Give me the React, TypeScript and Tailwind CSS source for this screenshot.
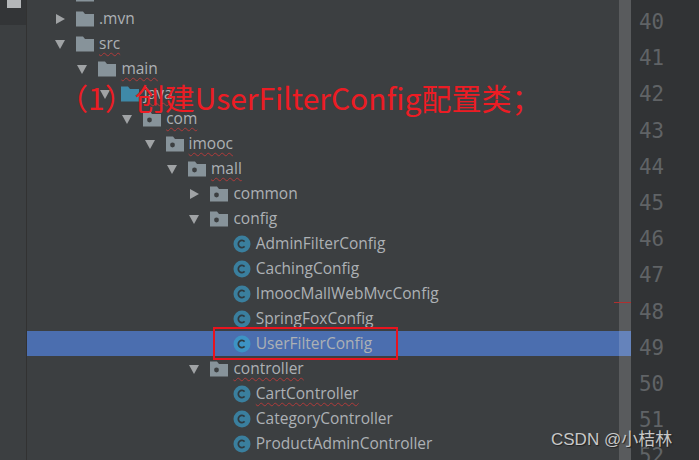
import React, { FC } from "react";

type Kind = "folder" | "package" | "source" | "class";

interface TreeRow {
  depth: number;
  label: string;
  kind: Kind;
  arrow?: "open" | "closed";
  squiggle?: boolean;
  selected?: boolean;
}

const rows: TreeRow[] = [
  { depth: 0, label: "", kind: "folder" },
  { depth: 0, label: ".mvn", kind: "folder", arrow: "closed" },
  { depth: 0, label: "src", kind: "folder", arrow: "open", squiggle: true },
  { depth: 1, label: "main", kind: "folder", arrow: "open", squiggle: true },
  { depth: 2, label: "java", kind: "source", arrow: "open", squiggle: true },
  { depth: 3, label: "com", kind: "package", arrow: "open", squiggle: true },
  { depth: 4, label: "imooc", kind: "package", arrow: "open", squiggle: true },
  { depth: 5, label: "mall", kind: "package", arrow: "open", squiggle: true },
  { depth: 6, label: "common", kind: "package", arrow: "closed" },
  { depth: 6, label: "config", kind: "package", arrow: "open" },
  { depth: 7, label: "AdminFilterConfig", kind: "class" },
  { depth: 7, label: "CachingConfig", kind: "class" },
  { depth: 7, label: "ImoocMallWebMvcConfig", kind: "class" },
  { depth: 7, label: "SpringFoxConfig", kind: "class" },
  { depth: 7, label: "UserFilterConfig", kind: "class", selected: true },
  { depth: 6, label: "controller", kind: "package", arrow: "open", squiggle: true },
  { depth: 7, label: "CartController", kind: "class", squiggle: true },
  { depth: 7, label: "CategoryController", kind: "class" },
  { depth: 7, label: "ProductAdminController", kind: "class" },
];

const lineNumbers = [40, 41, 42, 43, 44, 45, 46, 47, 48, 49, 50, 51, 52];

const Arrow: FC<{ dir: "open" | "closed" }> = ({ dir }) => (
  <svg width="12" height="12" viewBox="0 0 12 12" className="shrink-0">
    {dir === "open" ? (
      <polygon points="1,2 11,2 6,11" fill="#a0a3a5" />
    ) : (
      <polygon points="2,1 11,6 2,11" fill="#a0a3a5" />
    )}
  </svg>
);

const NodeIcon: FC<{ kind: Kind; selected?: boolean }> = ({ kind, selected }) => {
  if (kind === "class") {
    return (
      <svg width="18" height="18" viewBox="0 0 18 18" className="shrink-0">
        <circle cx="9" cy="9" r="8.5" fill={selected ? "#3d93c4" : "#3a7f9e"} />
        <path d="M11.6 6.6 A3.6 3.6 0 1 0 11.6 11.4" fill="none" stroke="#2f3a40" strokeWidth="1.7" />
      </svg>
    );
  }
  return (
    <svg width="18" height="16" viewBox="0 0 18 16" className="shrink-0">
      <path
        d="M0 0.5 H7 L9 3 H18 V15.5 H0 Z"
        fill={kind === "source" ? "#3f89a8" : "#87939a"}
      />
      {kind === "package" && <circle cx="6.5" cy="9" r="2.4" fill="#3c3f41" />}
    </svg>
  );
};

const Row: FC<{ row: TreeRow }> = ({ row }) => (
  <div
    className={`flex h-[25px] items-center ${row.selected ? "bg-[#4b6eaf]" : ""}`}
    style={{ paddingLeft: 27 + row.depth * 22.4 }}
  >
    <div className="flex w-[22px] shrink-0 justify-start">
      {row.arrow && <Arrow dir={row.arrow} />}
    </div>
    <NodeIcon kind={row.kind} selected={row.selected} />
    <span
      className={`ml-[5px] whitespace-nowrap text-[15.5px] leading-[25px] text-[#adb1b5] ${
        row.squiggle
          ? "underline decoration-[#b03a3a] decoration-wavy decoration-1 underline-offset-[3px]"
          : ""
      }`}
    >
      {row.label}
    </span>
  </div>
);

export default function App() {
  return (
    <div className="relative flex h-[460px] w-[699px] overflow-hidden bg-[#3c3f41] font-['Open_Sans','Noto_Sans',sans-serif]">
      <div className="w-[27px] shrink-0 border-r border-[#323232]">
        <div className="h-[25px] bg-[#333537] pl-[7px]">
          <div className="h-[8px] w-[14px] bg-[#b4b6b8]" />
        </div>
      </div>

      <div className="relative flex-1 overflow-hidden">
        <div className="-mt-[19px]">
          {rows.map((row, i) => (
            <Row key={i} row={row} />
          ))}
        </div>
        {/* scrollbar track over the tree */}
        <div className="absolute bottom-0 right-0 top-0 w-[12px] bg-[rgba(255,255,255,0.15)]" />
        <div className="absolute right-0 top-[302px] h-px w-[17px] bg-[#b03030]" />
      </div>

      <div className="w-[68px] shrink-0 bg-[#313335] pl-[8px] pt-[4px] font-['DejaVu_Sans_Mono',monospace] text-[20.8px] text-[#606366]">
        {lineNumbers.map((n) => (
          <div key={n} className="h-[36.2px] leading-[36.2px]">
            {n}
          </div>
        ))}
      </div>

      {/* annotation pasted on the screenshot */}
      <div className="absolute left-[58px] top-[76px] whitespace-nowrap font-['Noto_Sans_CJK_SC',sans-serif] text-[30px] leading-[42px] text-[#ec1c24]">
        （1）创建UserFilterConfig配置类；
      </div>
      <div className="absolute left-[213px] top-[327px] h-[33px] w-[185px] border-2 border-[#e8141e]" />
      <div className="absolute left-[551px] top-[428px] whitespace-nowrap font-['Liberation_Sans','Noto_Sans_CJK_SC',sans-serif] text-[17px] leading-[24px] text-[#c8c8c8] [text-shadow:1px_1px_1px_#222]">
        CSDN @小桔林
      </div>
    </div>
  );
}
